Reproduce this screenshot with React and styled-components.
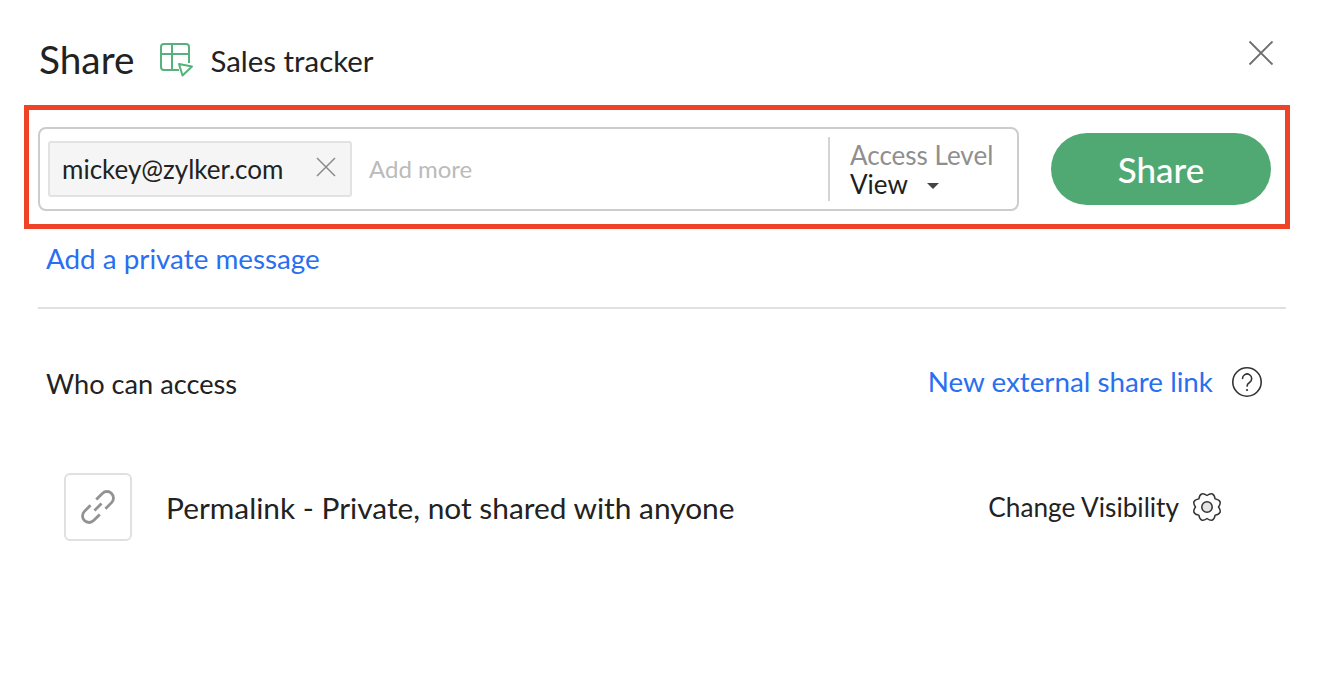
import React from "react";
import styled, { createGlobalStyle } from "styled-components";

const GlobalStyle = createGlobalStyle`
  html, body {
    margin: 0;
    background: #fff;
    font-family: Lato, "Open Sans", sans-serif;
    color: #222;
  }
`;

const Dialog = styled.div`
  width: 1326px;
  height: 698px;
  box-sizing: border-box;
  padding: 36px 36px 0 24px;
  overflow: hidden;
`;

const Header = styled.div`
  display: flex;
  align-items: center;
  height: 48px;
  padding: 0 0 0 16px;
`;

const Title = styled.div`
  font-size: 38.800px;
  line-height: 48px;
  margin-top: -3px;
  margin-left: -1px;
`;

const DocIcon = styled.svg`
  width: 36px;
  height: 36px;
  margin-left: 25px;
  margin-top: 0;
`;

const DocName = styled.div`
  font-size: 29.400px;
  line-height: 48px;
  margin-left: 15px;
  margin-top: 2px;
`;

const CloseButton = styled.svg`
  width: 26px;
  height: 26px;
  margin-left: auto;
  margin-right: 16px;
  margin-top: -14px;
`;

const Highlight = styled.div`
  display: flex;
  align-items: center;
  box-sizing: border-box;
  width: 1266px;
  height: 124px;
  margin-top: 21px;
  padding: 4px 14px 0 9px;
  border: 5px solid #ee4326;
`;

const InputBox = styled.div`
  display: flex;
  align-items: center;
  box-sizing: border-box;
  width: 981px;
  height: 84px;
  padding: 0 0 0 8px;
  border: 2px solid #ccc;
  border-radius: 8px;
`;

const Chip = styled.div`
  display: flex;
  align-items: center;
  justify-content: space-between;
  box-sizing: border-box;
  width: 304px;
  height: 56px;
  padding: 0 13px 0 12px;
  background: #f5f5f5;
  border: 2px solid #e2e2e2;
  border-radius: 3px;
  font-size: 26px;
`;

const ChipClose = styled.svg`
  width: 22px;
  height: 22px;
  margin-top: -4px;
`;

const AddMore = styled.div`
  flex: 1;
  margin-left: 17px;
  margin-top: -2px;
  font-size: 24px;
  color: #bbb;
`;

const AccessLevel = styled.div`
  box-sizing: border-box;
  width: 189px;
  height: 64px;
  padding-left: 20px;
  border-left: 2px solid #d4d4d4;
`;

const AccessLabel = styled.div`
  font-size: 26px;
  line-height: 28px;
  color: #8f8f8f;
  margin-top: 4px;
`;

const AccessValue = styled.div`
  display: flex;
  align-items: center;
  font-size: 26px;
  line-height: 30px;
  color: #1e1e1e;
`;

const Caret = styled.span`
  width: 0;
  height: 0;
  margin: 4px 0 0 19px;
  border-left: 6px solid transparent;
  border-right: 6px solid transparent;
  border-top: 6px solid #444;
`;

const ShareButton = styled.button`
  width: 220px;
  height: 72px;
  margin-left: 32px;
  padding: 0;
  border: 0;
  border-radius: 36px;
  background: #50a973;
  color: #fff;
  font-family: inherit;
  font-size: 35px;
  font-weight: 500;
`;

const LinkText = styled.a`
  font-size: 27.800px;
  color: #2a6ff0;
`;

const MessageRow = styled.div`
  height: 40px;
  margin-top: 10px;
  padding-left: 22px;
  line-height: 40px;
`;

const Divider = styled.div`
  width: 1248px;
  height: 2px;
  margin: 28px 0 0 14px;
  background: #e0e0e0;
`;

const AccessHeader = styled.div`
  display: flex;
  align-items: center;
  justify-content: space-between;
  width: 1217px;
  height: 40px;
  margin-top: 53px;
  padding-left: 22px;
`;

const SectionTitle = styled.div`
  font-size: 27.200px;
  margin-top: 2px;
`;

const HelpGroup = styled.div`
  display: flex;
  align-items: center;
  gap: 18px;
`;

const HelpLink = styled(LinkText)`
  margin-top: -2px;
`;

const LineIcon = styled.svg`
  width: ${(p) => p.$size}px;
  height: ${(p) => p.$size}px;
`;

const PermalinkRow = styled.div`
  display: flex;
  align-items: center;
  height: 68px;
  margin-top: 71px;
  padding-left: 40px;
`;

const LinkTile = styled.div`
  display: flex;
  align-items: center;
  justify-content: center;
  box-sizing: border-box;
  width: 68px;
  height: 68px;
  border: 2px solid #e0e0e0;
  border-radius: 6px;
`;

const PermalinkText = styled.div`
  margin-left: 34px;
  font-size: 29.850px;
`;

const VisibilityGroup = styled.div`
  display: flex;
  align-items: center;
  gap: 12px;
  margin-left: auto;
  margin-right: 67px;
  font-size: 26.200px;
`;

// scalloped outline of the settings cog
const cogPath = () => {
  const lobes = 8;
  const c = 16;
  let d = "";
  for (let i = 0; i < lobes; i++) {
    const a0 = (i / lobes) * Math.PI * 2;
    const a1 = ((i + 0.5) / lobes) * Math.PI * 2;
    const a2 = ((i + 1) / lobes) * Math.PI * 2;
    const x0 = c + 11.500 * Math.cos(a0);
    const y0 = c + 11.500 * Math.sin(a0);
    const x1 = c + 17.500 * Math.cos(a1);
    const y1 = c + 17.500 * Math.sin(a1);
    const x2 = c + 11.500 * Math.cos(a2);
    const y2 = c + 11.500 * Math.sin(a2);
    if (i === 0) d += `M${x0} ${y0}`;
    d += `Q${x1} ${y1} ${x2} ${y2}`;
  }
  return d + "Z";
};

const App = () => (
  <Dialog>
    <GlobalStyle />
    <Header>
      <Title>Share</Title>
      <DocIcon viewBox="0 0 36 36" fill="none" stroke="#55b27a" strokeWidth="2">
        <path d="M20 28H5a3 3 0 0 1-3-3V5a3 3 0 0 1 3-3h22a3 3 0 0 1 3 3v16" />
        <path d="M2 12h28M13 2v26" />
        <path d="M20 22l13 2.500-9.500 9z" strokeLinejoin="round" />
      </DocIcon>
      <DocName>Sales tracker</DocName>
      <CloseButton viewBox="0 0 26 26" stroke="#6e6e6e" strokeWidth="1.800">
        <path d="M1.500 1.500l23 23M24.500 1.500l-23 23" />
      </CloseButton>
    </Header>

    <Highlight>
      <InputBox>
        <Chip>
          mickey@zylker.com
          <ChipClose viewBox="0 0 22 22" stroke="#8a8a8a" strokeWidth="1.500">
            <path d="M2 2l18 18M20 2L2 20" />
          </ChipClose>
        </Chip>
        <AddMore>Add more</AddMore>
        <AccessLevel>
          <AccessLabel>Access Level</AccessLabel>
          <AccessValue>
            View
            <Caret />
          </AccessValue>
        </AccessLevel>
      </InputBox>
      <ShareButton>Share</ShareButton>
    </Highlight>

    <MessageRow>
      <LinkText>Add a private message</LinkText>
    </MessageRow>
    <Divider />

    <AccessHeader>
      <SectionTitle>Who can access</SectionTitle>
      <HelpGroup>
        <HelpLink>New external share link</HelpLink>
        <LineIcon $size={32} viewBox="0 0 32 32" fill="none" stroke="#333" strokeWidth="1.600">
          <circle cx="16" cy="16" r="14.200" />
          <path d="M11.500 12.500a4.600 4.600 0 1 1 7 4c-1.600 1-2.400 1.800-2.400 3.600" strokeLinecap="round" />
          <circle cx="16" cy="24" r="1.100" fill="#333" stroke="none" />
        </LineIcon>
      </HelpGroup>
    </AccessHeader>

    <PermalinkRow>
      <LinkTile>
        <LineIcon $size={36} viewBox="0 0 36 36" fill="none" stroke="#929292" strokeWidth="2.800">
          <g transform="rotate(-45 18 18)">
            <path d="M14 11.500H5.300a6.500 6.500 0 0 0 0 13H14" />
            <path d="M13 18h10" />
            <path d="M22 11.500h8.700a6.500 6.500 0 0 1 0 13H22" />
          </g>
        </LineIcon>
      </LinkTile>
      <PermalinkText>Permalink - Private, not shared with anyone</PermalinkText>
      <VisibilityGroup>
        Change Visibility
        <LineIcon $size={32} viewBox="0 0 32 32" fill="none" stroke="#333" strokeWidth="1.500">
          <path d={cogPath()} strokeLinejoin="round" />
          <circle cx="16" cy="16" r="5.200" fill="#e4e4e4" />
        </LineIcon>
      </VisibilityGroup>
    </PermalinkRow>
  </Dialog>
);

export default App;
